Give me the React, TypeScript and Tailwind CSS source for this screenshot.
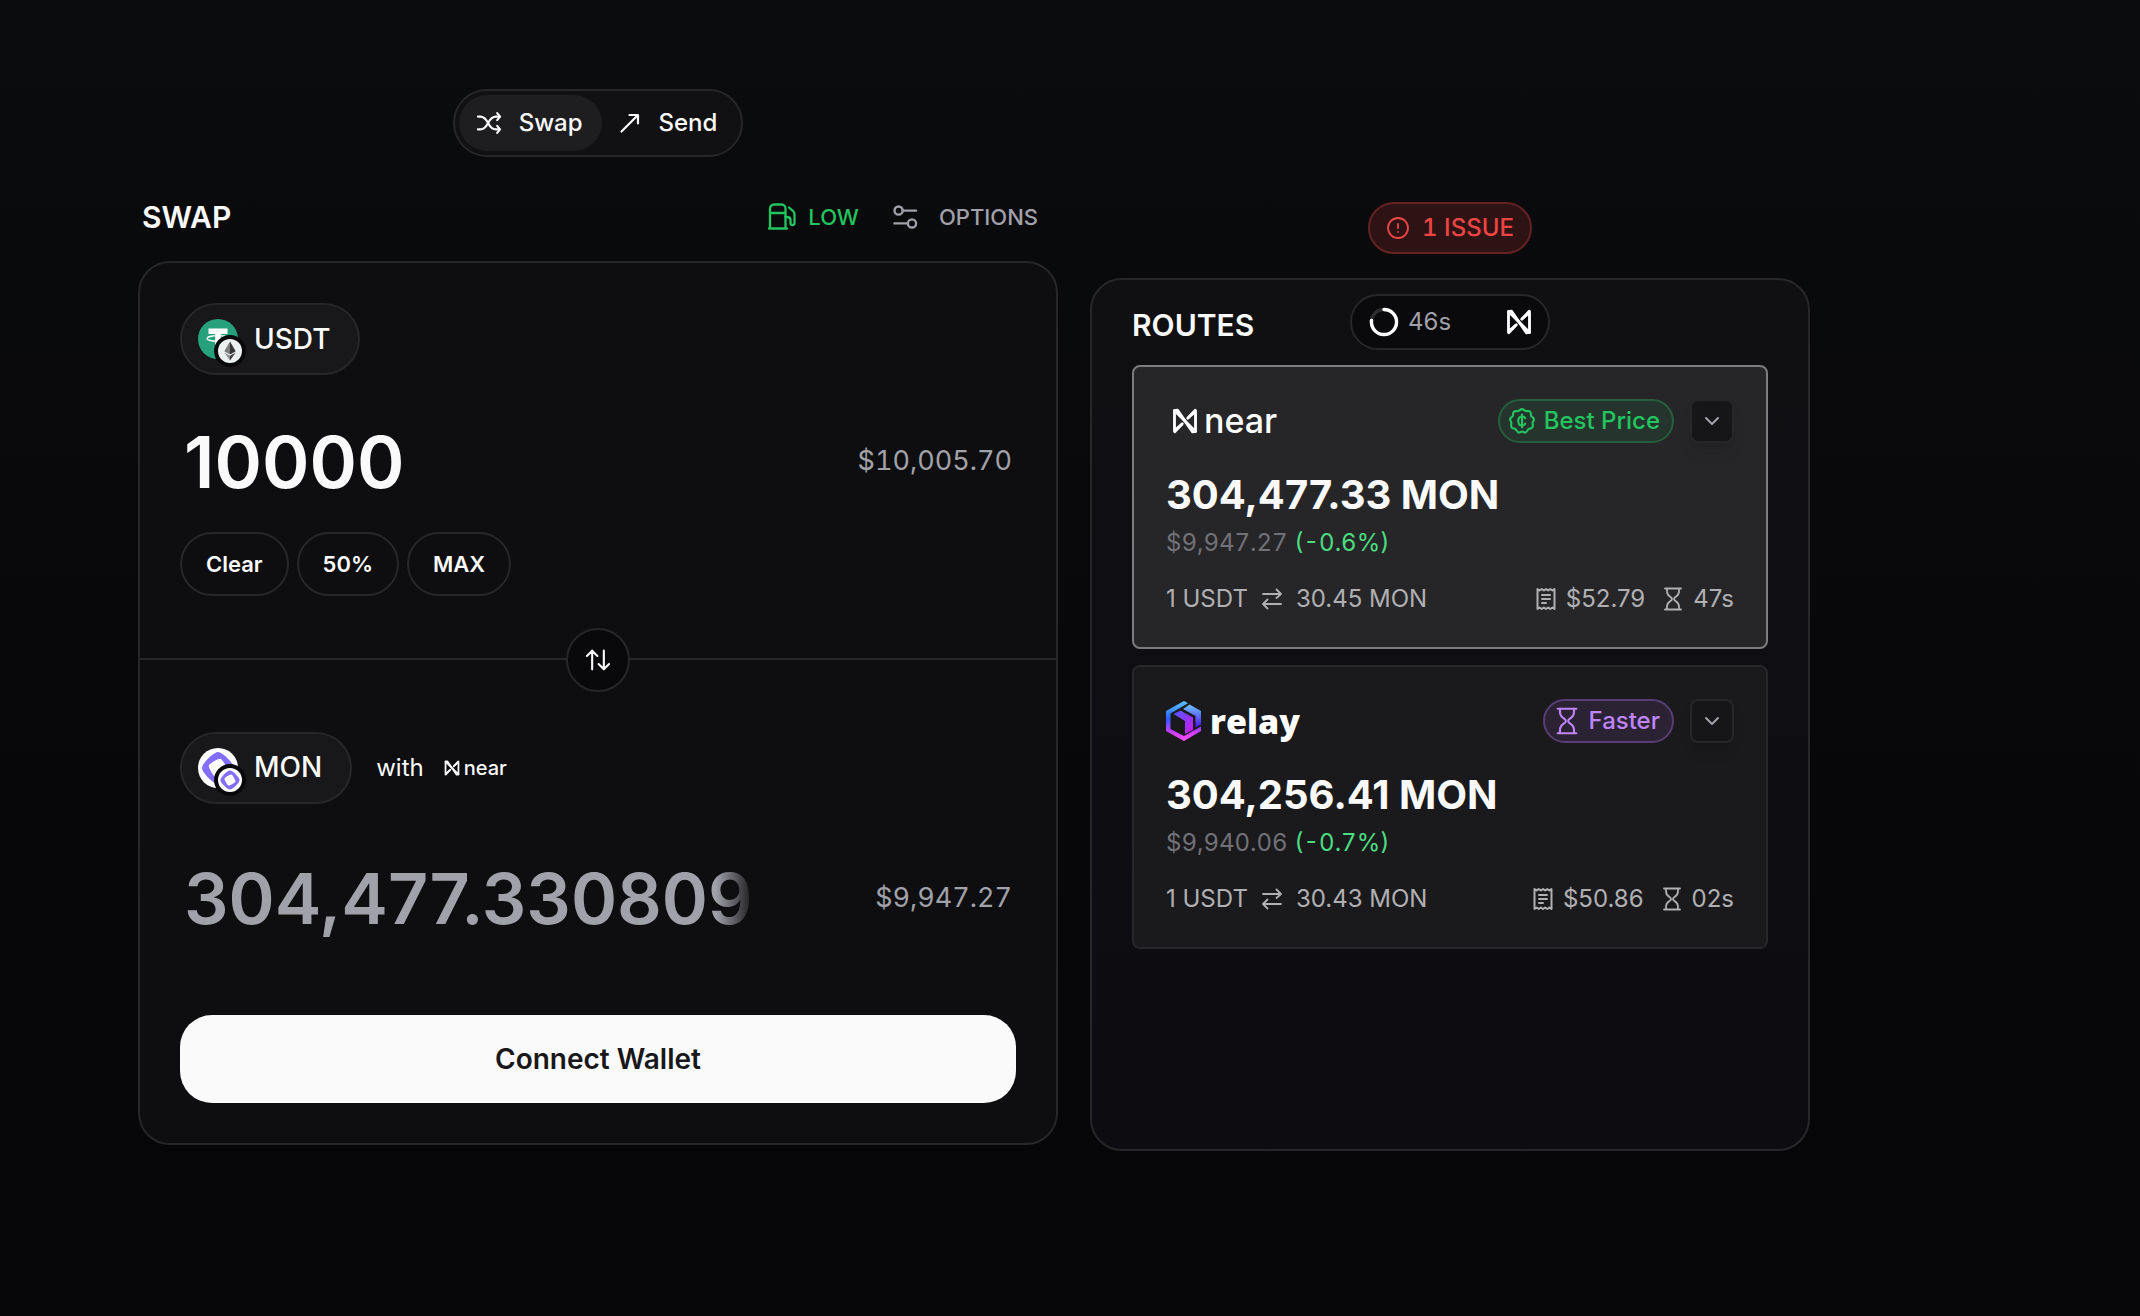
import { useState } from 'react'
import { ChevronDown, CircleAlert } from 'lucide-react'

const ROUTES = [
  { id: 'near', amount: '304,477.33 MON', usd: '$9,947.27', diff: '(-0.6%)', rate: '30.45 MON', fee: '$52.79', time: '47s' },
  { id: 'relay', amount: '304,256.41 MON', usd: '$9,940.06', diff: '(-0.7%)', rate: '30.43 MON', fee: '$50.86', time: '02s' },
]

const QUICK_AMOUNTS = ['Clear', '50%', 'MAX']

const stroke = { fill: 'none', stroke: 'currentColor', strokeWidth: 1.8, strokeLinecap: 'round', strokeLinejoin: 'round' } as const

function ShuffleIcon() {
  return (
    <svg viewBox="0 0 24 24" className="size-7" {...stroke} aria-hidden="true">
      <path d="M19 3.500L21.500 6.500L19 9.500M19 14.500L21.500 17.500L19 20.500" />
      <path d="M2.500 6.500H4.500C8 6.500 9.600 8.800 11.200 12S14.500 17.500 18 17.500H21" />
      <path d="M2.500 17.500H4.500C8 17.500 9.600 15.200 11.200 12S14.500 6.500 18 6.500H21" />
    </svg>
  )
}

function SendIcon() {
  return (
    <svg viewBox="0 0 24 24" className="size-6" {...stroke} strokeWidth={2.200} aria-hidden="true">
      <path d="M3.500 20.500L19.500 4.500M11.500 4H20V12.500" />
    </svg>
  )
}

function GasIcon() {
  return (
    <svg viewBox="0 0 28 28" className="size-7" {...stroke} strokeWidth={2.300} aria-hidden="true">
      <path d="M2 25V5.500a4 4 0 0 1 4-4h7.500a4 4 0 0 1 4 4V25M1 25.500h18M2 10h15.500" />
      <path d="M21 4.500l4.200 3.700c.9.900 1.300 1.600 1.300 2.800v9a2 2 0 0 1-4 0v-3c0-1.800-1-3-3.500-3h-1.500" />
    </svg>
  )
}

function OptionsIcon() {
  return (
    <svg viewBox="0 0 24 24" className="size-7" {...stroke} strokeWidth={2} aria-hidden="true">
      <circle cx="6.500" cy="6.500" r="3.500" />
      <circle cx="18" cy="17.500" r="3.500" />
      <path d="M10 6.500H21.500M14.500 17.500H3" />
    </svg>
  )
}

function SwapVertIcon() {
  return (
    <svg viewBox="0 0 24 24" className="size-7" {...stroke} aria-hidden="true">
      <path d="M7 20V4M2.500 8.500L7 4l4.500 4.500M17 4v16M12.500 15.500L17 20l4.500-4.500" />
    </svg>
  )
}

function RateIcon() {
  return (
    <svg viewBox="0 0 24 24" className="size-6" {...stroke} aria-hidden="true">
      <path d="M3 7H21M16.500 2.500L21 7l-4.500 4M21 17H3M7.500 12.500L3 17l4.500 4.500" />
    </svg>
  )
}

function ReceiptIcon() {
  return (
    <svg viewBox="0 0 24 24" className="size-6" {...stroke} strokeWidth={2} aria-hidden="true">
      <path d="M3.500 2l2.100 1.500L7.700 2l2.200 1.500L12 2l2.100 1.500L16.300 2l2.100 1.500L20.500 2v20l-2.100-1.500-2.100 1.500-2.200-1.500L12 22l-2.100-1.500L7.700 22l-2.100-1.500L3.500 22z" />
      <path d="M8 8h8M8 12h8M8 16h4" />
    </svg>
  )
}

function HourglassIcon({ className = 'size-6' }: { className?: string }) {
  return (
    <svg viewBox="0 0 24 24" className={className} {...stroke} aria-hidden="true">
      <path d="M4 1.500h16M4 22.500h16" />
      <path d="M6 2v2.500c0 3 2 4.500 3.500 5.500 2 1.300 2 2.700 0 4C8 15 6 16.500 6 19.500V22M18 2v2.500c0 3-2 4.500-3.500 5.500-2 1.300-2 2.700 0 4 1.500 1 3.500 2.500 3.500 5.500V22" />
    </svg>
  )
}

function BestPriceIcon() {
  return (
    <svg viewBox="0 0 24 24" className="size-7" {...stroke} aria-hidden="true">
      <path d="M12 1.800c1.500 0 2 1.400 3.400 1.700 1.400.3 2.500-.5 3.600.5s.3 2.200.8 3.500c.5 1.200 2.200 1.500 2.400 3 .1 1.400-1.100 2-1.100 3.300 0 1.300.7 2.400-.2 3.600-.9 1.200-2.200.7-3.300 1.500-1.100.8-1.100 2.500-2.500 2.900-1.300.3-2-.8-3.100-.8s-1.800 1.100-3.100.8c-1.400-.4-1.400-2.100-2.500-2.900-1.100-.8-2.400-.3-3.300-1.500-.9-1.200-.2-2.300-.2-3.600 0-1.300-1.200-1.900-1.100-3.300.2-1.500 1.900-1.800 2.400-3 .5-1.300-.3-2.500.8-3.500s2.200-.2 3.600-.5C10 3.200 10.500 1.800 12 1.800z" />
      <path d="M14.700 9.700c-.4-1-1.400-1.600-2.700-1.600-1.900 0-3.200 1.500-3.200 3.900s1.300 3.900 3.200 3.900c1.300 0 2.300-.6 2.700-1.600M12 6.500v11" />
    </svg>
  )
}

function NearMark({ className }: { className: string }) {
  return (
    <svg viewBox="0 0 24 24" className={className} fill="none" stroke="currentColor" strokeWidth={2.600} strokeLinejoin="round" strokeLinecap="round" aria-hidden="true">
      <path d="M8.500 15.500L2.300 20.800V2.500L5 2L19 22L21.700 21.500V3.200L15.500 8.500" />
      <path d="M2.300 2.300L21.700 21.700M14.500 9.500L21.500 2M2.500 22l7-7.500" />
    </svg>
  )
}

function RelayMark() {
  return (
    <svg viewBox="0 0 36 40" className="h-10 w-9" aria-hidden="true">
      <defs>
        <linearGradient id="relay-outer" x1="0" y1="0" x2="0" y2="1">
          <stop offset="0" stopColor="#5cc4ff" />
          <stop offset=".45" stopColor="#2a5cff" />
          <stop offset=".75" stopColor="#c23bff" />
          <stop offset="1" stopColor="#ff4df0" />
        </linearGradient>
        <linearGradient id="relay-inner" x1="0" y1="0" x2="1" y2="1">
          <stop offset="0" stopColor="#4a5cff" />
          <stop offset="1" stopColor="#d414f5" />
        </linearGradient>
        <linearGradient id="relay-top" x1="0" y1="0" x2="0" y2="1">
          <stop offset="0" stopColor="#6ec3ff" />
          <stop offset="1" stopColor="#4a12f5" />
        </linearGradient>
      </defs>
      <path d="M18 0l4 2.300L4.500 12.500v15.500L18 35l17-9.500V30L18 40 0 30V10z" fill="url(#relay-outer)" />
      <path d="M23.500 3.500L35 10v13.500l-5.500 3V15L17 8z" fill="url(#relay-top)" />
      <path d="M7.500 13l7-3.500 12.500 7V29l-8 4V20z" fill="url(#relay-inner)" />
    </svg>
  )
}

function ProviderLogo({ id }: { id: string }) {
  if (id === 'near') {
    return (
      <div className="flex items-center gap-1.5 pl-1.5 text-white">
        <NearMark className="size-[26px]" />
        <span className="text-[34px] leading-8 font-medium">near</span>
      </div>
    )
  }
  return (
    <div className="flex items-center gap-2 text-white">
      <RelayMark />
      <span className="font-['Open_Sans',sans-serif] text-[34px] leading-10 font-extrabold">relay</span>
    </div>
  )
}

function MonadCoin({ className }: { className: string }) {
  return (
    <svg viewBox="0 0 40 40" className={className} aria-hidden="true">
      <circle cx="20" cy="20" r="20" fill="#fff" />
      <path d="M20 4C15.500 4 4 15.500 4 20s11.500 16 16 16 16-11.500 16-16S24.500 4 20 4zm-2.500 25.200c-1.900-.5-7.200-9.800-6.700-11.700s9.800-7.200 11.700-6.700 7.200 9.800 6.700 11.700-9.800 7.200-11.700 6.700z" fill="#836ef9" />
    </svg>
  )
}

function TetherCoin({ className }: { className: string }) {
  return (
    <svg viewBox="0 0 40 40" className={className} aria-hidden="true">
      <circle cx="20" cy="20" r="20" fill="#26a17b" />
      <path d="M10.500 9.500h19v5.500h-6.700v14h-5.600V15h-6.700z" fill="#fff" />
      <ellipse cx="20" cy="19.500" rx="11" ry="2.800" fill="none" stroke="#fff" strokeWidth="1.300" />
    </svg>
  )
}

function EthCoin({ className }: { className: string }) {
  return (
    <svg viewBox="0 0 24 24" className={className} aria-hidden="true">
      <circle cx="12" cy="12" r="12" fill="#ecf0f1" />
      <path d="M12 2.500L6.300 12.200 12 15.500z" fill="#7d7d7d" />
      <path d="M12 2.500l5.700 9.700L12 15.500z" fill="#343434" />
      <path d="M6.300 13.500L12 21.500v-4.700z" fill="#8c8c8c" />
      <path d="M17.700 13.500L12 21.500v-4.700z" fill="#3c3c3b" />
    </svg>
  )
}

function TokenButton({ symbol }: { symbol: string }) {
  const isMon = symbol === 'MON'
  return (
    <button type="button" className="flex h-18 items-center gap-4 rounded-full border-2 border-[#27272a] bg-[#18181a] pr-7 pl-4 text-[28px] font-medium">
      <span className="relative size-10">
        {isMon ? <MonadCoin className="size-10" /> : <TetherCoin className="size-10" />}
        <span className="absolute -right-2 -bottom-2 rounded-full bg-[#09090b] p-1">
          {isMon ? <MonadCoin className="size-6" /> : <EthCoin className="size-6" />}
        </span>
      </span>
      {symbol}
    </button>
  )
}

function RouteCard({ route, selected }: { route: (typeof ROUTES)[number]; selected: boolean }) {
  return (
    <article
      className={
        selected
          ? 'rounded-lg border-2 border-[#7c7c7f] bg-[#262628] px-8 pt-8 pb-7'
          : 'rounded-lg border-2 border-[#27272a] bg-[#1a1a1d] px-8 pt-8 pb-7'
      }
    >
      <div className="flex items-center justify-between">
        <ProviderLogo id={route.id} />
        <div className="flex items-center gap-4">
          {selected ? (
            <span className="flex h-11 items-center gap-2 rounded-full border-2 border-[#265f3d] bg-[#25352d] pr-3 pl-2 text-2xl font-medium text-[#22c55e]">
              <BestPriceIcon />
              Best Price
            </span>
          ) : (
            <span className="flex h-11 items-center gap-2 rounded-full border-2 border-[#593d76] bg-[#2b2333] pr-3 pl-2 text-2xl font-medium text-[#c084fc]">
              <HourglassIcon className="size-7" />
              Faster
            </span>
          )}
          <button
            type="button"
            aria-label="Show route details"
            className="flex size-11 items-center justify-center rounded-lg border-2 border-[#27272a] bg-[#161618] text-[#a1a1aa] shadow-lg"
          >
            <ChevronDown className="size-6" strokeWidth={2} />
          </button>
        </div>
      </div>
      <p className="mt-7 text-[40px] leading-12 font-bold">{route.amount}</p>
      <p className="mt-1 text-2xl leading-10 tabular-nums">
        <span className="text-[#717177]">{route.usd}</span> <span className="text-[#4ade80]">{route.diff}</span>
      </p>
      <div className="mt-4 flex items-center justify-between text-2xl leading-10 text-[#b0b0b2]">
        <div className="flex items-center gap-3">
          <span>1 USDT</span>
          <RateIcon />
          <span>{route.rate}</span>
        </div>
        <div className="flex items-center gap-2">
          <ReceiptIcon />
          <span className="mr-2">{route.fee}</span>
          <HourglassIcon />
          <span>{route.time}</span>
        </div>
      </div>
    </article>
  )
}

export default function App() {
  const [amount, setAmount] = useState('10000')

  return (
    <main className="min-h-screen bg-linear-to-b from-[#0b0c0e] via-[#08080a] to-[#060608] pt-[89px] pr-[330px] pb-20 pl-[138px] font-[Inter,sans-serif] text-[#fafafa]">
      <div className="grid grid-cols-[920fr_720fr] gap-8">
        <section>
          <nav className="mx-auto flex w-fit gap-1 rounded-full border-2 border-[#27272a] bg-[#111113] p-1 text-2xl font-medium">
            <button type="button" className="flex h-14 items-center gap-4 rounded-full bg-[#1e1e20] pr-5 pl-4">
              <ShuffleIcon />
              Swap
            </button>
            <button type="button" className="flex h-14 items-center gap-4 rounded-full pr-5 pl-3">
              <SendIcon />
              Send
            </button>
          </nav>

          <div className="mt-10 flex h-10 items-center justify-between pr-5 pl-1">
            <h1 className="text-3xl font-semibold">SWAP</h1>
            <div className="flex items-center gap-8 text-[22px] font-medium">
              <button type="button" className="flex items-center gap-3 text-[#22c55e]">
                <GasIcon />
                LOW
              </button>
              <button type="button" className="flex items-center gap-5 text-[#a1a1aa]">
                <OptionsIcon />
                OPTIONS
              </button>
            </div>
          </div>

          <div className="mt-6 rounded-[32px] border-2 border-[#27272a] bg-[#0e0e10]">
            <div className="px-10 pt-10 pb-[62px]">
              <TokenButton symbol="USDT" />
              <div className="mt-9.5 flex h-24 items-center justify-between gap-8">
                <input
                  aria-label="Amount to swap"
                  value={amount}
                  onChange={(e) => setAmount(e.target.value)}
                  className="w-[576px] min-w-0 bg-transparent pl-1 text-[72px] leading-none font-semibold outline-none"
                />
                <span className="pr-1 text-[27px] text-[#a1a1aa] tabular-nums">$10,005.70</span>
              </div>
              <div className="mt-[23px] flex gap-2">
                {QUICK_AMOUNTS.map((q) => (
                  <button key={q} type="button" className="h-16 rounded-full border-2 border-[#27272a] px-6 text-[22px] font-semibold">
                    {q}
                  </button>
                ))}
              </div>
            </div>

            <div className="relative border-t-2 border-[#27272a]">
              <button
                type="button"
                aria-label="Switch tokens"
                className="absolute top-0 left-1/2 flex size-16 -translate-x-1/2 -translate-y-1/2 items-center justify-center rounded-full border-2 border-[#27272a] bg-[#09090b]"
              >
                <SwapVertIcon />
              </button>
            </div>

            <div className="px-10 pt-18 pb-10">
              <div className="flex items-center gap-6 text-2xl">
                <TokenButton symbol="MON" />
                <div className="flex items-center gap-5">
                  with
                  <span className="flex items-center gap-1">
                    <NearMark className="size-4" />
                    <span className="text-xl font-medium">near</span>
                  </span>
                </div>
              </div>
              <div className="mt-11.5 flex h-24 items-center justify-between gap-8">
                <input
                  aria-label="Amount received"
                  readOnly
                  value="304,477.330809"
                  className="w-[576px] min-w-0 bg-transparent mask-r-from-93% pl-1 text-[70px] leading-none font-semibold text-[#a1a1aa] outline-none"
                />
                <span className="pr-1 text-[27px] text-[#a1a1aa] tabular-nums">$9,947.27</span>
              </div>
              <button type="button" className="mt-[69px] h-22 w-full rounded-[32px] bg-[#fafafa] text-[28px] font-semibold text-[#18181b]">
                Connect Wallet
              </button>
            </div>
          </div>
        </section>

        <section className="flex flex-col pt-[113px]">
          <button type="button" className="mx-auto flex h-13 items-center gap-3 rounded-full border-2 border-[#652224] bg-[#2d1314] px-4 text-2xl font-medium text-[#ef4444] tabular-nums">
            <CircleAlert className="size-6" strokeWidth={1.800} />
            1 ISSUE
          </button>

          <div className="mt-6 min-h-[873px] rounded-[32px] border-2 border-[#27272a] bg-linear-to-b from-[#101013] to-[#0d0c11] px-10 pt-3.5">
            <div className="grid grid-cols-[1fr_auto_1fr] items-center">
              <h2 className="pt-1.5 text-3xl font-semibold">ROUTES</h2>
              <div className="flex h-14 w-[200px] items-center rounded-full border-2 border-[#27272a] bg-[#0a0a0c] px-4 text-2xl text-[#a1a1aa]">
                <svg viewBox="0 0 28 28" className="mr-2 size-8" fill="none" strokeWidth="3" aria-hidden="true">
                  <circle cx="14" cy="14" r="11" stroke="#2c2c2e" />
                  <circle cx="14" cy="14" r="11" stroke="#fff" pathLength="100" strokeDasharray="77 23" strokeLinecap="round" transform="rotate(-90 14 14)" />
                </svg>
                46s
                <NearMark className="ml-auto size-[26px] text-white" />
              </div>
            </div>
            <div className="mt-[15px] flex flex-col gap-4">
              {ROUTES.map((r, i) => (
                <RouteCard key={r.id} route={r} selected={i === 0} />
              ))}
            </div>
          </div>
        </section>
      </div>
    </main>
  )
}
